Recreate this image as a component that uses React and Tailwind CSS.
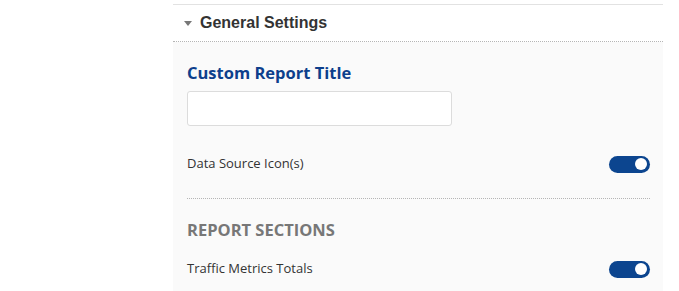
export default function App() {
    return (
        <div className="min-h-screen bg-white">
            <div className="ml-[173px] w-[490px] pt-[4px]">
                {/* Header */}
                <div className="border-t border-[#e2e2e2] bg-white">
                    <div className="flex items-center h-[37px] pl-[11px] border-b border-dotted border-[#b5b5b5]">
                        <svg width="8" height="5" viewBox="0 0 8 5" className="mr-[8px]">
                            <path d="M0 0 L8 0 L4 5 Z" fill="#777" />
                        </svg>
                        <span className="text-[16px] font-bold text-[#333]" style={{ fontFamily: '"Liberation Sans", Arial, sans-serif' }}>
                            General Settings
                        </span>
                    </div>
                </div>

                {/* Body */}
                <div className="bg-[#fafafa] px-[14px] pr-[13px] h-[260px]" style={{ fontFamily: '"Open Sans", sans-serif' }}>
                    <div className="pt-[19px] text-[16.5px] font-bold text-[#0d3f8c] leading-[24px]">Custom Report Title</div>
                    <input
                        type="text"
                        className="mt-[6px] block w-[265px] h-[35px] bg-white border border-[#dcdcdc] rounded-[3px]"
                    />

                    <div className="flex items-center justify-between mt-[28px] h-[20px]">
                        <span className="text-[13px] text-[#333]">Data Source Icon(s)</span>
                        <Toggle />
                    </div>

                    <div className="mt-[24px] border-t border-dotted border-[#b5b5b5]" />

                    <div className="mt-[19px] text-[16.5px] font-bold text-[#777] leading-[24px]">REPORT SECTIONS</div>

                    <div className="flex items-center justify-between mt-[17px] h-[20px]">
                        <span className="text-[13px] text-[#333]">Traffic Metrics Totals</span>
                        <Toggle />
                    </div>
                </div>
            </div>
        </div>
    );
}

function Toggle() {
    return (
        <div className="w-[41px] h-[17px] rounded-full bg-[#0c458f] flex items-center justify-end pr-[3px]">
            <div className="w-[12px] h-[12px] rounded-full bg-white" />
        </div>
    );
}
